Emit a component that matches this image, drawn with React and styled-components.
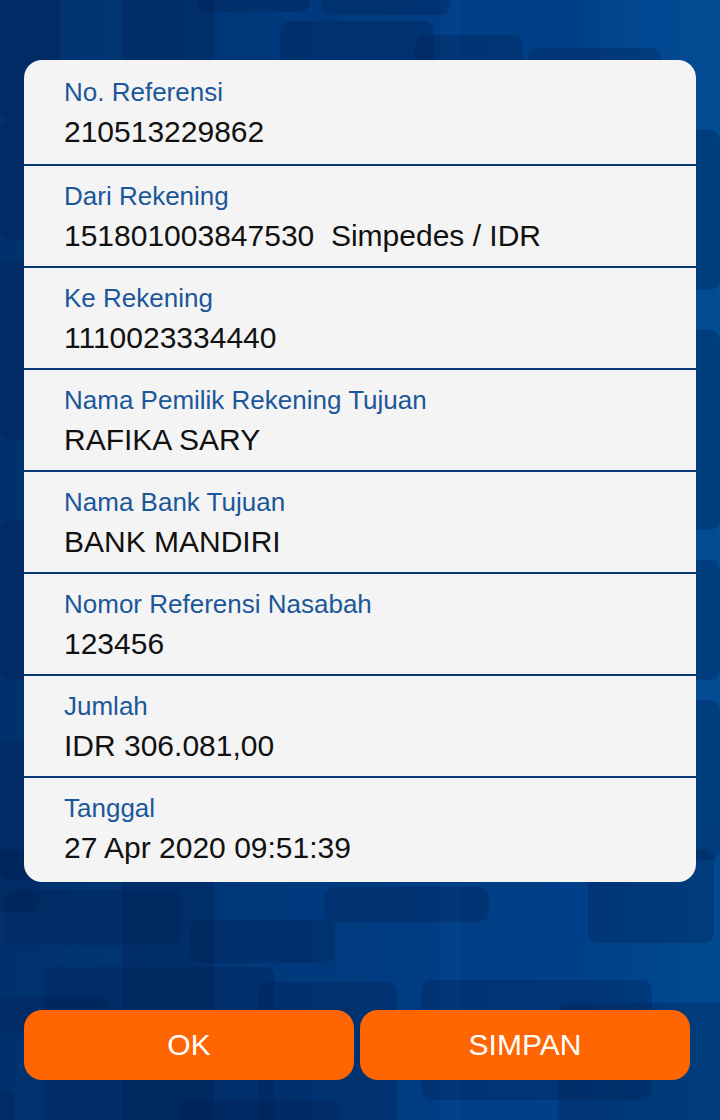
import styled, { createGlobalStyle } from 'styled-components';

const GlobalStyle = createGlobalStyle`
  html, body {
    margin: 0;
    padding: 0;
    background: #003a7e;
  }
  * {
    box-sizing: border-box;
  }
`;

const Screen = styled.main`
  position: relative;
  width: 720px;
  height: 1120px;
  overflow: hidden;
  background: linear-gradient(90deg, #00316d 0%, #003a7e 45%, #00408a 80%, #004a90 100%);
  font-family: 'Liberation Sans', Arial, sans-serif;
`;

const Pattern = styled.svg`
  position: absolute;
  inset: 0;
  width: 720px;
  height: 1120px;
  z-index: 0;
`;

const Content = styled.div`
  position: relative;
  z-index: 1;
  display: flex;
  flex-direction: column;
  padding: 60px 24px 0;
`;

const Card = styled.section`
  display: flex;
  flex-direction: column;
  background: #f4f4f4;
  border-radius: 18px;
  overflow: hidden;
`;

const Row = styled.div`
  height: ${(props) => props.$height}px;
  padding: ${(props) => (props.$first ? 17 : 15)}px 40px 0;
  border-top: ${(props) => (props.$first ? 'none' : '2px solid #0a3977')};
`;

const Label = styled.div`
  font-size: 26px;
  line-height: 30px;
  color: #1b5799;
`;

const Value = styled.div`
  margin-top: 7px;
  font-size: 30px;
  line-height: 36px;
  color: #111;
  white-space: pre;
`;

const Actions = styled.div`
  display: flex;
  gap: 6px;
  margin-top: 128px;
  padding-right: 6px;
`;

const Button = styled.button`
  flex: 1;
  height: 70px;
  border: none;
  border-radius: 18px;
  background: #ff6500;
  color: #fff;
  font-family: 'Liberation Sans', Arial, sans-serif;
  font-size: 30px;
  cursor: pointer;
`;

const rows = [
  ['No. Referensi', '210513229862'],
  ['Dari Rekening', '151801003847530  Simpedes / IDR'],
  ['Ke Rekening', '1110023334440'],
  ['Nama Pemilik Rekening Tujuan', 'RAFIKA SARY'],
  ['Nama Bank Tujuan', 'BANK MANDIRI'],
  ['Nomor Referensi Nasabah', '123456'],
  ['Jumlah', 'IDR 306.081,00'],
  ['Tanggal', '27 Apr 2020 09:51:39'],
];

// dark tiles of the backdrop: x, y, w, h
const tiles = [
  [0, -20, 60, 140],
  [122, -20, 92, 1160],
  [197, -20, 113, 32],
  [321, -20, 129, 35],
  [280, 21, 154, 120],
  [415, 35, 108, 110],
  [528, 48, 133, 90],
  [0, 120, 60, 120],
  [660, 130, 60, 160],
  [0, 260, 30, 180],
  [680, 330, 40, 200],
  [0, 520, 40, 160],
  [690, 560, 30, 120],
  [0, 740, 30, 140],
  [690, 700, 30, 160],
  [5, 890, 176, 55],
  [-10, 850, 50, 62],
  [190, 920, 145, 43],
  [324, 887, 165, 35],
  [588, 850, 126, 93],
  [44, 967, 231, 170],
  [259, 982, 138, 160],
  [-10, 997, 120, 36],
  [558, 1003, 170, 130],
  [422, 980, 230, 120],
  [-10, 1090, 24, 60],
  [180, 1100, 160, 40],
];

const light = [
  [440, -10, 22, 1150],
  [600, -10, 130, 840],
];

function Backdrop() {
  return (
    <Pattern viewBox="0 0 720 1120" aria-hidden="true">
      {light.map(([x, y, w, h], i) => (
        <rect key={`l${i}`} x={x} y={y} width={w} height={h} fill="#0a5aa8" opacity="0.16" />
      ))}
      {tiles.map(([x, y, w, h], i) => (
        <rect key={i} x={x} y={y} width={w} height={h} rx="10" fill="#001d4e" opacity="0.3" />
      ))}
    </Pattern>
  );
}

function rowHeight(i) {
  if (i === 0) return 104;
  if (i === rows.length - 1) return 106;
  return 102;
}

function App() {
  return (
    <Screen>
      <GlobalStyle />
      <Backdrop />
      <Content>
        <Card>
          {rows.map(([label, value], i) => (
            <Row key={label} $first={i === 0} $height={rowHeight(i)}>
              <Label>{label}</Label>
              <Value>{value}</Value>
            </Row>
          ))}
        </Card>
        <Actions>
          <Button type="button">OK</Button>
          <Button type="button">SIMPAN</Button>
        </Actions>
      </Content>
    </Screen>
  );
}

export default App;
